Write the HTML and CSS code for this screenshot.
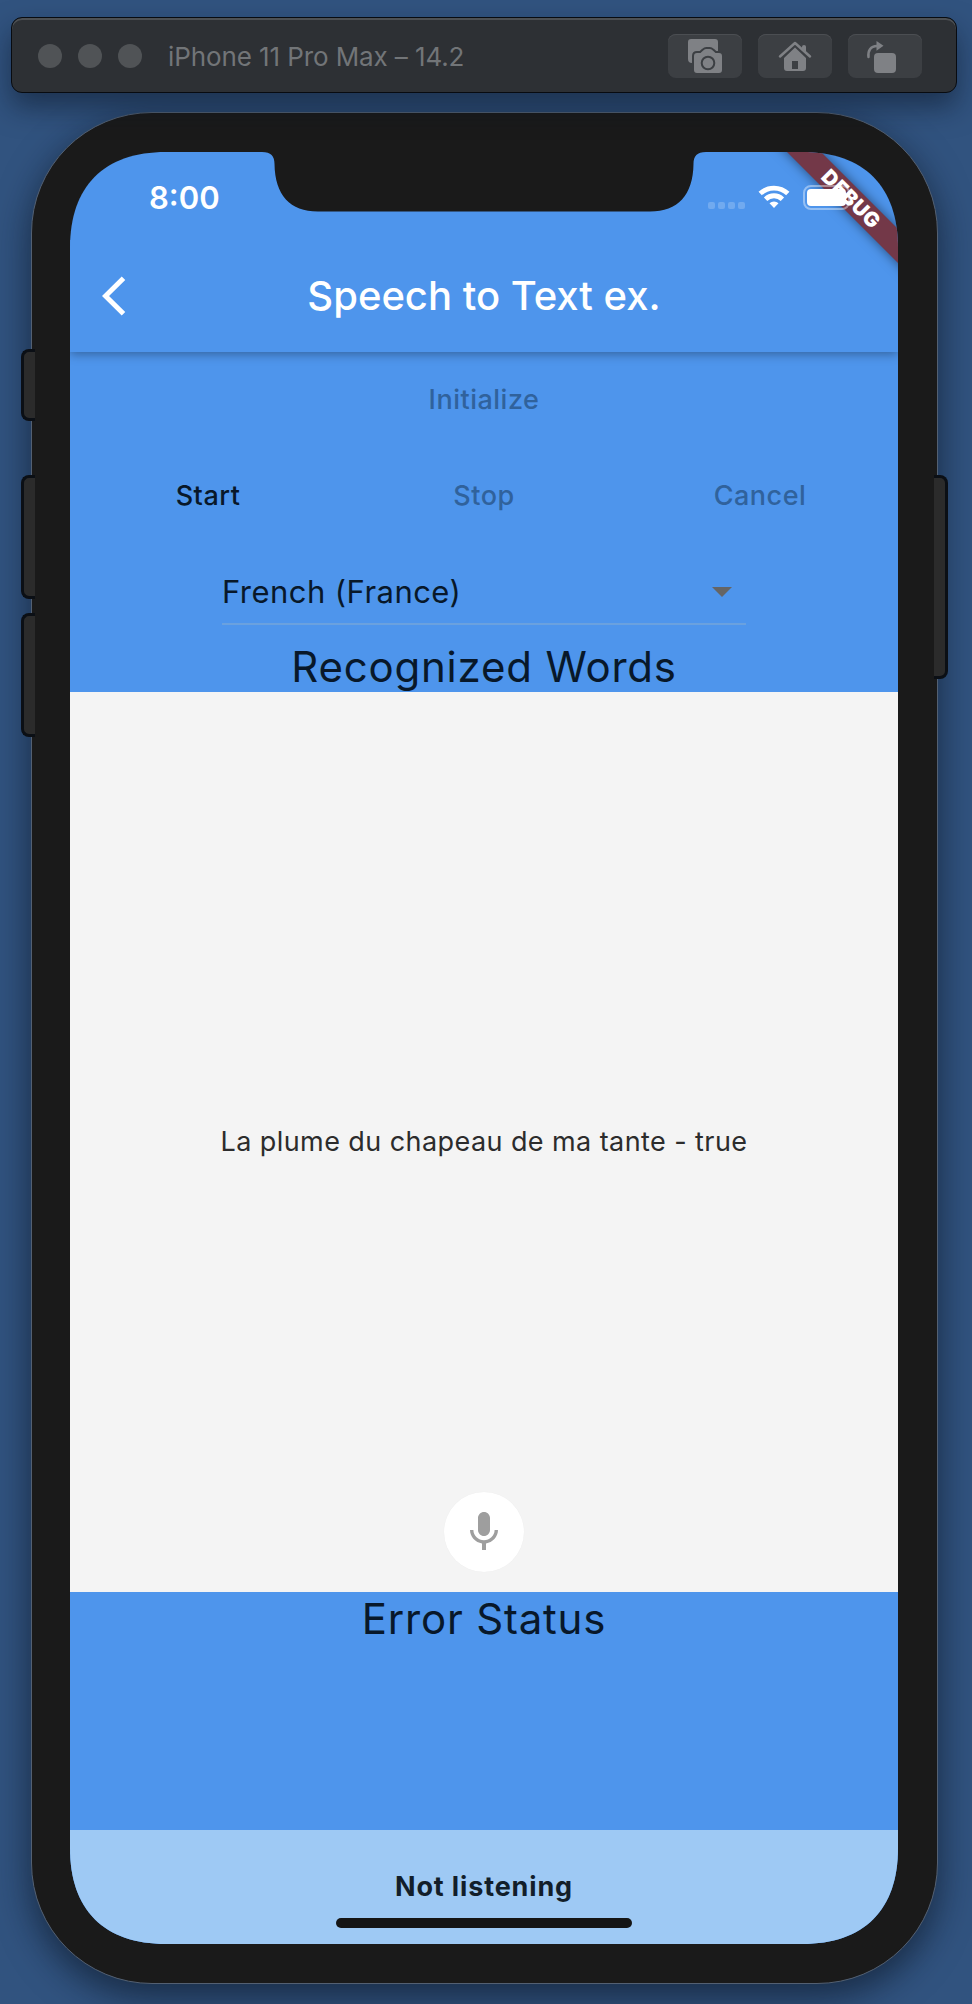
FILE: index.html
```html
<!DOCTYPE html>
<html lang="en">
<head>
<meta charset="utf-8">
<title>iPhone 11 Pro Max – 14.2</title>
<link rel="stylesheet" href="styles.css">
</head>
<body>
<div class="desktop">
  <header class="window-bar">
    <div class="lights"><i></i><i></i><i></i></div>
    <span class="window-title">iPhone 11 Pro Max – 14.2</span>
    <div class="tools">
      <button class="tool" aria-label="Screenshot">
        <svg width="74" height="44" viewBox="0 0 74 44"><path class="ico" d="M23 5h24a3 3 0 0 1 3 3v12H26v9h-2a4 4 0 0 1-4-4V8a3 3 0 0 1 3-3z"/><path class="ico cut" d="M29 19h3.500l3-2.700q1.300-1.300 2.800-1.300h3.400q1.500 0 2.800 1.300l3 2.700H51q3 0 3 3v14q0 3-3 3H29q-3 0-3-3V22q0-3 3-3z"/><circle class="ring" cx="40" cy="29" r="6.300"/></svg>
      </button>
      <button class="tool" aria-label="Home">
        <svg width="74" height="44" viewBox="0 0 74 44"><path class="ico" fill-rule="evenodd" d="M26 24L37 13.500 48 24V34q0 3-3 3H29q-3 0-3-3zM34 27v8h6v-8z"/><path class="roof" d="M22 22.500L37 9l15 13.500"/><path class="ico" d="M44 12.500q0-1.500 2-1.500t2 1.500V18l-4-3.600z"/></svg>
      </button>
      <button class="tool" aria-label="Rotate">
        <svg width="74" height="44" viewBox="0 0 74 44"><rect class="ico" x="26" y="19" width="22" height="20" rx="4"/><path class="turn" d="M20.500 23c-.8-6 2-11 8.500-11"/><path class="ico" d="M28.500 7l7 4.700-7 5z"/></svg>
      </button>
    </div>
  </header>

  <div class="phone">
    <i class="side mute"></i><i class="side up"></i><i class="side down"></i><i class="side power"></i>
    <main class="screen">
      <div class="banner-clip"><div class="banner">DEBUG</div></div>
      <div class="status">
        <span class="clock">8:00</span>
        <div class="signals">
          <div class="cells"><i></i><i></i><i></i><i></i></div>
          <svg class="wifi" width="32" height="24" viewBox="0 0 32 24"><path d="M2.200 8.600a20 20 0 0 1 27.600 0M7.600 14.200a12 12 0 0 1 16.800 0"/><path class="dot" d="M11.500 18.300a6.500 6.500 0 0 1 9 0L16 23z"/></svg>
          <div class="battery"><i></i></div>
        </div>
      </div>
      <svg class="notch" width="460" height="60" viewBox="0 0 460 60"><path d="M8 0C17 0 20.500 4 20.500 12C21 43 36 59.500 64 59.500H396C424 59.500 439 43 439.500 12C439.500 4 443 0 452 0z"/></svg>
      <nav class="app-bar">
        <svg class="back" width="24" height="40" viewBox="0 0 24 40"><path d="M21.500 2.200L3.500 20l18 17.800"/></svg>
        <h1 class="app-title">Speech to Text ex.</h1>
      </nav>
      <section class="controls">
        <div class="row"><span class="btn off">Initialize</span></div>
        <div class="row"><span class="btn">Start</span><span class="btn off">Stop</span><span class="btn off">Cancel</span></div>
        <div class="picker-row"><div class="picker"><span class="locale">French (France)</span><svg width="20" height="10" viewBox="0 0 20 10"><path d="M0 0h20L10 10z"/></svg></div></div>
        <h2 class="heading">Recognized Words</h2>
      </section>
      <section class="result">
        <p class="phrase">La plume du chapeau de ma tante - true</p>
        <div class="mic"><svg width="48" height="48" viewBox="0 0 24 24"><path d="M12 14c1.660 0 3-1.340 3-3V5c0-1.660-1.340-3-3-3S9 3.340 9 5v6c0 1.660 1.340 3 3 3zm5.300-3c0 3-2.540 5.100-5.300 5.100S6.700 14 6.700 11H5c0 3.410 2.720 6.230 6 6.720V21h2v-3.280c3.280-.48 6-3.300 6-6.720h-1.700z"/></svg></div>
      </section>
      <section class="errors"><h2 class="heading">Error Status</h2></section>
      <footer class="footer"><strong class="state">Not listening</strong><i class="home-bar"></i></footer>
    </main>
  </div>
</div>
</body>
</html>
```
FILE: styles.css
```css
* { box-sizing: border-box; }
body { margin: 0; font-family: Inter, "Liberation Sans", sans-serif; }
i { display: block; font-style: normal; }
svg { display: block; flex: none; }
h1, h2, p { margin: 0; font-weight: 400; }
span, strong, h1, h2, p { white-space: nowrap; }

.desktop {
  width: 972px; height: 2004px; overflow: hidden;
  padding: 17px 15px 0 11px;
  background: #31537f;
}
.window-bar {
  position: relative; z-index: 2;
  height: 76px; display: flex; align-items: center;
  padding: 2px 34px 0 26px;
  background: #2d3034;
  border: 1px solid #080b10; border-radius: 11px;
  box-shadow: inset 0 2px 0 #4d5053, 0 14px 28px rgba(10, 20, 35, .5);
}
.lights { display: flex; gap: 16px; }
.lights i { width: 24px; height: 24px; border-radius: 50%; background: #505356; }
.window-title { margin-left: 26px; font-size: 26px; letter-spacing: -.1px; color: #727578; }
.tools { display: flex; gap: 16px; margin-left: auto; }
.tool { width: 74px; height: 44px; padding: 0; border: 0; border-radius: 8px; background: #3c3f43; box-shadow: inset 0 1px 0 #4b4e52; }
.ico { fill: #7f8185; }
.cut { stroke: #3c3f43; stroke-width: 4px; paint-order: stroke; }
.ring { fill: none; stroke: #3c3f43; stroke-width: 2px; }
.roof { fill: none; stroke: #7f8185; stroke-width: 2.500px; stroke-linecap: round; stroke-linejoin: round; }
.turn { fill: none; stroke: #7f8185; stroke-width: 2.500px; stroke-linecap: round; }

.phone {
  position: relative; width: 907px; height: 1872px;
  margin: 19px 0 0 20px; padding: 39px 38px;
  background: #1a1a1a; border: 1px solid #536072; border-radius: 121px;
  box-shadow: 0 12px 34px 2px rgba(10, 20, 35, .6);
}
.side { position: absolute; left: -11px; width: 14px; height: 124px; background: #2b2b2b; border: 3px solid #0b0f15; border-right: 0; border-radius: 8px 0 0 8px; }
.mute { top: 236px; height: 72px; }
.up { top: 362px; }
.down { top: 500px; }
.power { left: 902px; top: 362px; height: 204px; border: 3px solid #0b0f15; border-left: 0; border-radius: 0 8px 8px 0; }

.screen {
  position: relative; width: 828px; height: 1792px;
  display: flex; flex-direction: column; background: #4e95ec;
  clip-path: path("M0 96C0 34 34 0 96 0H732C794 0 828 34 828 96V1696C828 1758 794 1792 732 1792H96C34 1792 0 1758 0 1696Z");
}
.notch { position: absolute; left: 184px; top: 0; fill: #1a1a1a; }
.banner-clip { position: absolute; z-index: 2; top: 0; right: 0; width: 160px; height: 160px; overflow: hidden; }
.banner {
  position: absolute; left: -7px; top: 35px; width: 240px; height: 24px;
  transform: rotate(45deg); text-align: center;
  font-size: 20.500px; line-height: 24px; font-weight: 900; letter-spacing: .4px; color: #fff;
  background: #733848; box-shadow: 0 0 12px rgba(0, 0, 0, .5);
}
.status { position: relative; z-index: 3; height: 88px; display: flex; align-items: flex-start; justify-content: space-between; padding: 33px 48px 0 79px; }
.clock { font-size: 31px; line-height: 25px; font-weight: 600; color: #fff; }
.signals { display: flex; align-items: flex-start; }
.cells { display: flex; gap: 3px; margin: 17px 13px 0 0; }
.cells i { width: 7px; height: 7px; border-radius: 2px; background: rgba(255, 255, 255, .2); }
.wifi { fill: none; stroke: #fff; stroke-width: 4.800px; margin-right: 13px; }
.wifi .dot { fill: #fff; stroke: none; }
.battery { width: 47px; height: 25px; padding: 2px; border: 2px solid rgba(255, 255, 255, .4); border-radius: 8px; }
.battery i { height: 17px; border-radius: 4px; background: #fff; }

.app-bar { position: relative; z-index: 1; height: 112px; display: flex; align-items: center; padding-left: 32px; background: #4e95ec; box-shadow: 0 2px 10px rgba(0, 0, 0, .35); clip-path: inset(0 0 -20px 0); }
.back { fill: none; stroke: #fff; stroke-width: 5px; }
.app-title { flex: 1; text-align: center; padding: 0 56px 2px 0; font-size: 40px; font-weight: 500; color: #fff; }

.controls { height: 340px; color: #08182a; }
.row { height: 96px; display: flex; align-items: center; padding-bottom: 2px; }
.btn { flex: 1; text-align: center; font-size: 27px; font-weight: 480; letter-spacing: .5px; }
.off { color: #30629c; }
.picker-row { height: 96px; padding: 14px 152px 0; }
.picker { height: 67px; display: flex; align-items: center; justify-content: space-between; padding: 2px 14px 0 0; border-bottom: 2px solid #6aa1df; }
.picker svg { fill: #656565; }
.locale { font-size: 31px; letter-spacing: .45px; }
.heading { height: 52px; line-height: 54px; text-align: center; font-size: 42px; letter-spacing: .8px; color: #08182a; }
.result { height: 900px; display: flex; flex-direction: column; align-items: center; padding: 99px 0 20px; background: #f4f4f4; color: #2c2c2c; }
.phrase { flex: 1; display: flex; align-items: center; font-size: 27px; letter-spacing: .42px; }
.mic { flex: none; width: 80px; height: 80px; border-radius: 50%; background: #fff; display: grid; place-items: center; box-shadow: 0 0 1px rgba(0, 0, 0, .06); }
.mic svg { fill: #9e9e9e; }
.errors { height: 238px; }
.footer { flex: 1; display: flex; flex-direction: column; align-items: center; padding-top: 40px; background: #9ec9f4; color: #121e2a; }
.state { height: 32px; line-height: 33px; font-size: 27px; font-weight: 650; letter-spacing: .85px; }
.home-bar { margin-top: 16px; width: 296px; height: 10px; border-radius: 5px; background: #151515; }
```
